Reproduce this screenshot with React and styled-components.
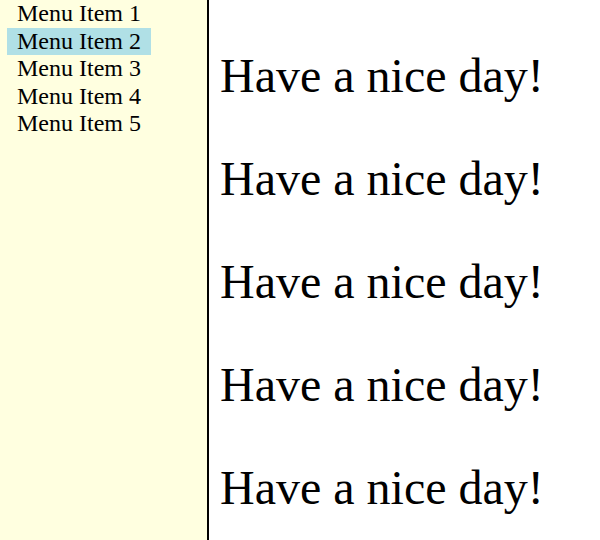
import React from "react"
import styled, { createGlobalStyle } from "styled-components"

const GlobalStyle = createGlobalStyle`
    html, body {
        margin: 0;
        padding: 0;
        overflow: hidden;
    }

    body {
        font-family: "Liberation Serif", "Times New Roman", serif;
        color: #000;
    }
`

const Layout = styled.div`
    display: flex;
    height: 100vh;
    overflow: hidden;
`

const Sidebar = styled.nav`
    flex: 0 0 207px;
    background-color: #ffffe0;
    border-right: 2px solid #000;
`

const Menu = styled.ul`
    margin: 0;
    padding: 0 0 0 7px;
    list-style: none;
`

const MenuItem = styled.li`
    width: 124px;
    padding: 0 10px;
    font-size: 24px;
    line-height: 27.5px;
    background-color: ${ ({ $active }) => $active ? `#b0e0e6` : `transparent` };
`

const Main = styled.main`
    flex: 1;
    padding: 0 11px;
`

const Greeting = styled.h1`
    margin: 48px 0;
    font-size: 48px;
    font-weight: normal;
    line-height: 55px;
`

const items = [ `Menu Item 1`, `Menu Item 2`, `Menu Item 3`, `Menu Item 4`, `Menu Item 5` ]

const App = () => (
    <>
        <GlobalStyle />
        <Layout>
            <Sidebar>
                <Menu>
                    { items.map( ( item, index ) => <MenuItem key={ index } $active={ index === 1 }>{ item }</MenuItem> ) }
                </Menu>
            </Sidebar>
            <Main>
                { [ 0, 1, 2, 3, 4 ].map( ( n ) => <Greeting key={ n }>Have a nice day!</Greeting> ) }
            </Main>
        </Layout>
    </>
)

export default App
